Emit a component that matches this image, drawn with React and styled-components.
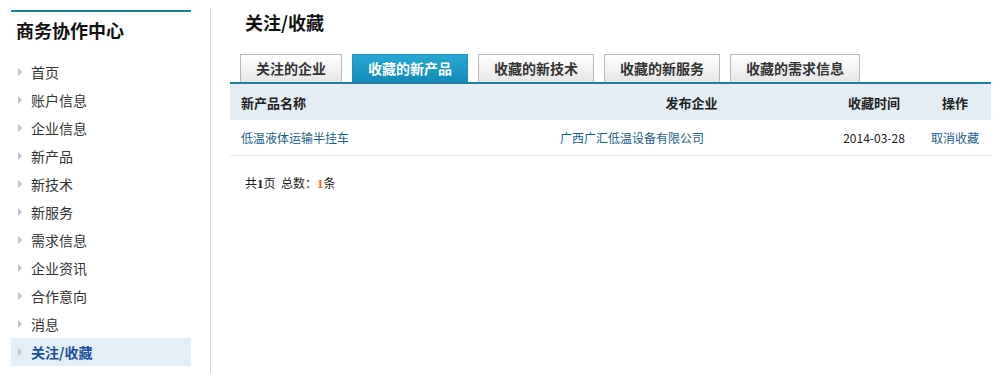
import styled, { createGlobalStyle } from "styled-components"

const GlobalStyle = createGlobalStyle`
    body {
        margin: 0;
        font-family: "Noto Sans CJK SC", "Liberation Sans", sans-serif;
        color: #333;
        background: #fff;
    }
`

const Page = styled.div`
    display: flex;
    padding-top: 8px;
    min-height: 365px;
`

const SideColumn = styled.aside`
    width: 211px;
    border-right: 1px solid #dcdcdc;
    padding-top: 2px;
    box-sizing: border-box;
`

const Sidebar = styled.div`
    margin-left: 11px;
    width: 180px;
    border-top: 2px solid #1e7fa3;
`

const SideTitle = styled.h2`
    margin: 0;
    padding: 6px 0 16px 5px;
    font-size: 18px;
    line-height: 24px;
    font-weight: bold;
    color: #111;
`

const NavList = styled.ul`
    list-style: none;
    margin: 0;
    padding: 0;
`

const NavItem = styled.li`
    display: flex;
    align-items: center;
    height: 28px;
    padding-left: 7px;
    font-size: 14px;
    color: ${p => (p.$active ? "#1a4f9c" : "#333")};
    font-weight: ${p => (p.$active ? "bold" : "normal")};
    background: ${p => (p.$active ? "#e3eef6" : "transparent")};

    &::before {
        content: "";
        width: 0;
        height: 0;
        border-top: 4px solid transparent;
        border-bottom: 4px solid transparent;
        border-left: 4px solid #c4c4c4;
        margin-right: 9px;
    }
`

const Main = styled.main`
    flex: 1;
    padding: 0 6px 0 19px;
`

const Title = styled.h1`
    margin: 0;
    padding-left: 15px;
    font-size: 18px;
    line-height: 28px;
    font-weight: bold;
    color: #111;
`

const Tabs = styled.div`
    display: flex;
    gap: 10px;
    margin-top: 18px;
    padding-left: 10px;
    border-bottom: 2px solid #1e7fa3;
`

const Tab = styled.div`
    height: 27px;
    line-height: 27px;
    padding: 0 15px;
    font-size: 14px;
    font-weight: bold;
    border: 1px solid ${p => (p.$active ? "#1a93bd" : "#b8b8b8")};
    border-bottom: none;
    color: ${p => (p.$active ? "#fff" : "#333")};
    background: ${p =>
        p.$active
            ? "linear-gradient(#27a9d2, #1389b6)"
            : "linear-gradient(#ffffff, #e6e6e6)"};
`

const Table = styled.table`
    width: 100%;
    border-collapse: collapse;
    font-size: 12px;
`

const HeadCell = styled.th`
    height: 36px;
    padding: 0 ${p => p.$pad || 0}px;
    background: #e3edf3;
    font-size: 13px;
    font-weight: bold;
    color: #222;
    text-align: ${p => p.$align || "center"};
`

const Cell = styled.td`
    height: 35px;
    padding: 0 ${p => p.$pad || 0}px;
    border-bottom: 1px solid #e3eaef;
    text-align: ${p => p.$align || "center"};
    color: ${p => (p.$link ? "#1d5d8c" : "#222")};
`

const Pager = styled.div`
    margin-top: 18px;
    padding-left: 15px;
    font-size: 12px;
    color: #222;

    & b {
        font-family: "Liberation Serif", serif;
        font-size: 13px;
    }

    & em {
        font-style: normal;
        font-weight: bold;
        color: #e2701a;
        font-family: "Liberation Serif", serif;
        font-size: 13px;
    }
`

const navItems = ["首页", "账户信息", "企业信息", "新产品", "新技术", "新服务", "需求信息", "企业资讯", "合作意向", "消息", "关注/收藏"]
const tabs = ["关注的企业", "收藏的新产品", "收藏的新技术", "收藏的新服务", "收藏的需求信息"]

const App = () => {
    return (
        <>
            <GlobalStyle />
            <Page>
                <SideColumn>
                    <Sidebar>
                        <SideTitle>商务协作中心</SideTitle>
                        <NavList>
                            {navItems.map(item => (
                                <NavItem key={item} $active={item === "关注/收藏"}>{item}</NavItem>
                            ))}
                        </NavList>
                    </Sidebar>
                </SideColumn>
                <Main>
                    <Title>关注/收藏</Title>
                    <Tabs>
                        {tabs.map(tab => (
                            <Tab key={tab} $active={tab === "收藏的新产品"}>{tab}</Tab>
                        ))}
                    </Tabs>
                    <Table>
                        <colgroup>
                            <col style={{ width: 324 }} />
                            <col style={{ width: 275 }} />
                            <col style={{ width: 90 }} />
                            <col />
                        </colgroup>
                        <thead>
                            <tr>
                                <HeadCell $align="left" $pad={11}>新产品名称</HeadCell>
                                <HeadCell>发布企业</HeadCell>
                                <HeadCell>收藏时间</HeadCell>
                                <HeadCell>操作</HeadCell>
                            </tr>
                        </thead>
                        <tbody>
                            <tr>
                                <Cell $align="left" $pad={11} $link>低温液体运输半挂车</Cell>
                                <Cell $align="left" $pad={6} $link>广西广汇低温设备有限公司</Cell>
                                <Cell>2014-03-28</Cell>
                                <Cell $link>取消收藏</Cell>
                            </tr>
                        </tbody>
                    </Table>
                    <Pager>共<b>1</b>页&nbsp;&nbsp;总数：<em>1</em>条</Pager>
                </Main>
            </Page>
        </>
    )
}

export default App
